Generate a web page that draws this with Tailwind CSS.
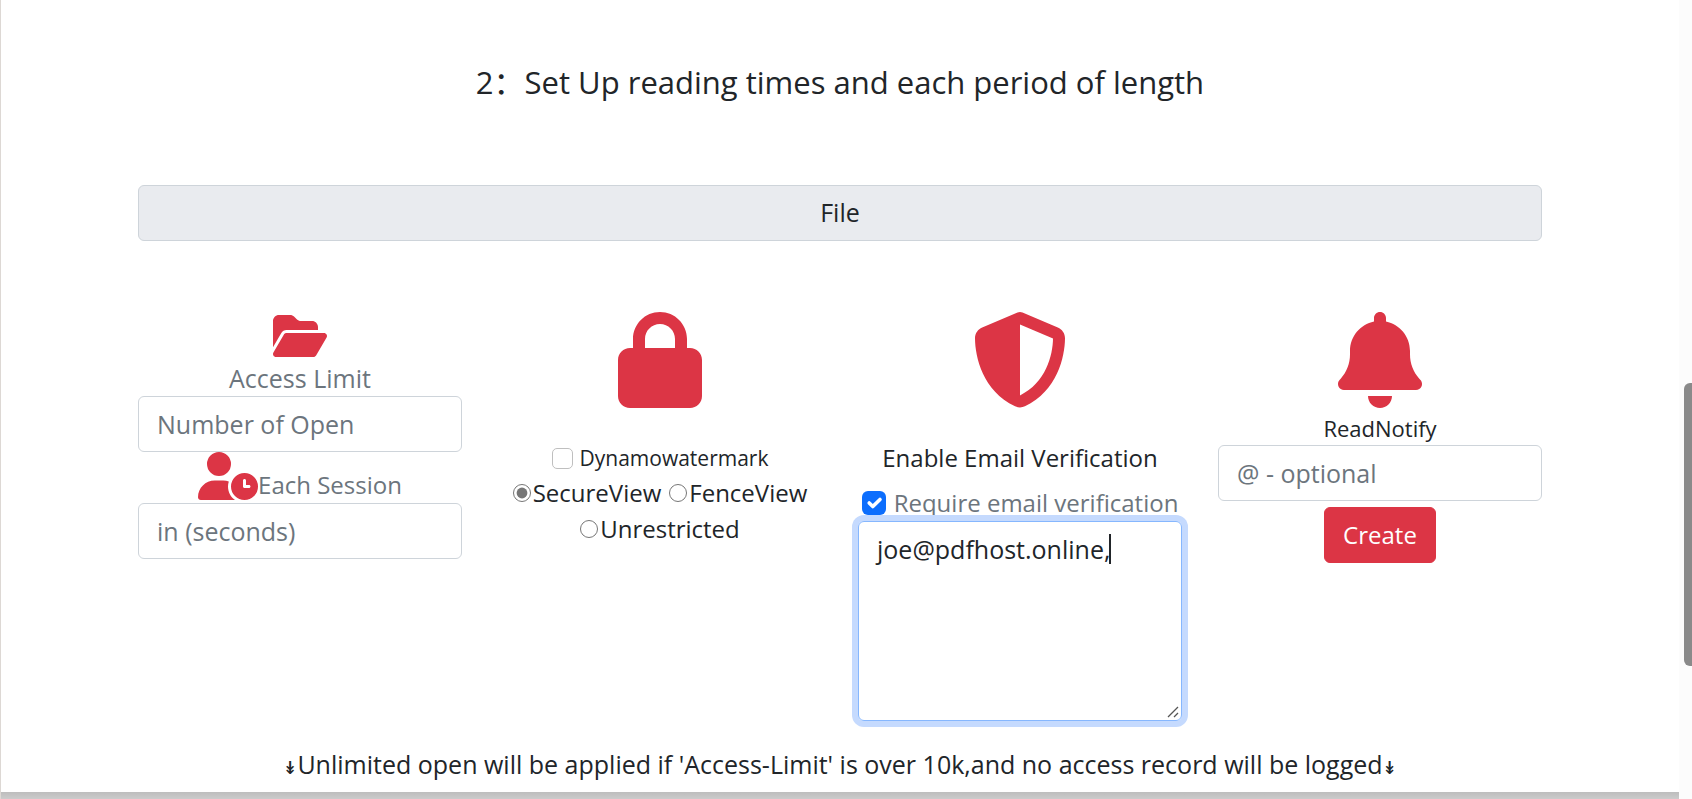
<!DOCTYPE html>
<html lang="en">
<head>
<meta charset="utf-8">
<meta name="viewport" content="width=device-width, initial-scale=1">
<title>Set Up reading times</title>
<script src="https://cdn.jsdelivr.net/npm/@tailwindcss/browser@4"></script>
</head>
<body class="flex min-h-screen bg-white text-[25px]/[36px] text-[#212529] font-['Open_Sans','Noto_Sans_CJK_SC',sans-serif]">
<main class="flex min-w-0 flex-1 flex-col border-l border-[#ddd8d4]">
  <div class="mx-auto flex w-full max-w-[1404px] flex-1 flex-col">
    <h1 class="pt-[59px] text-center text-[31px]/[46px]">2：Set Up reading times and each period of length</h1>
    <div class="mt-20 rounded-md border border-[#ced4da] bg-[#e9ebef] pt-2 pb-2.5 text-center">File</div>
    <form class="mt-[71px] grid grid-cols-4 gap-9 text-center">
      <section class="flex flex-col items-center">
        <svg class="h-12 fill-[#dc3545]" viewBox="0 0 576 512" aria-hidden="true"><path d="M88.700 223.800L0 375.800V96C0 60.700 28.700 32 64 32H181.500c17 0 33.300 6.700 45.300 18.700l26.500 26.500c12 12 28.300 18.700 45.300 18.700H416c35.300 0 64 28.700 64 64v32H144c-22.800 0-43.800 12.100-55.300 31.800zm27.600 16.100C122.100 230 132.600 224 144 224H544c11.500 0 22 6.100 27.700 16.100s5.700 22.200-.1 32.100l-112 192C453.900 474 443.400 480 432 480H32c-11.500 0-22-6.100-27.700-16.100s-5.700-22.200 .1-32.100l112-192z"/></svg>
        <label for="opens" class="text-[#6c757d]">Access Limit</label>
        <input id="opens" type="text" placeholder="Number of Open" class="w-full rounded-md border border-[#ced4da] px-[18px] py-[9px] placeholder:text-[#6c757d]">
        <div class="flex h-[51px] items-start">
          <svg class="h-12 fill-[#dc3545]" viewBox="0 0 640 512" aria-hidden="true"><path d="M224 0a128 128 0 1 1 0 256A128 128 0 1 1 224 0zM178.300 304h91.400c20.600 0 40.400 3.500 58.800 9.900C323 331 320 349.100 320 368c0 59.500 29.500 112.100 74.800 144H29.700C13.300 512 0 498.700 0 482.300C0 383.800 79.800 304 178.300 304zM352 368a144 144 0 1 1 288 0 144 144 0 1 1 -288 0zm144-80c-8.800 0-16 7.200-16 16v64c0 8.800 7.200 16 16 16h48c8.800 0 16-7.200 16-16s-7.200-16-16-16H512V304c0-8.800-7.200-16-16-16z"/></svg>
          <label for="secs" class="pt-[15px] text-2xl/[36px] text-[#6c757d]">Each Session</label>
        </div>
        <input id="secs" type="text" placeholder="in (seconds)" class="w-full rounded-md border border-[#ced4da] px-[18px] py-[9px] placeholder:text-[#6c757d]">
      </section>
      <section class="flex flex-col items-center">
        <svg class="h-24 fill-[#dc3545]" viewBox="0 0 448 512" aria-hidden="true"><path d="M144 144v48H304V144c0-44.200-35.800-80-80-80s-80 35.800-80 80zM80 192V144C80 64.500 144.500 0 224 0s144 64.500 144 144v48h16c35.300 0 64 28.700 64 64V448c0 35.300-28.700 64-64 64H64c-35.300 0-64-28.700-64-64V256c0-35.300 28.700-64 64-64H80z"/></svg>
        <label class="mt-[34px] flex items-center gap-[7px] text-[21px]/[33px]"><input type="checkbox" class="size-[21px] appearance-none rounded-[5px] border border-[#bfbfbf] bg-white">Dynamowatermark</label>
        <div class="flex flex-wrap justify-center gap-x-2 text-2xl/[36px]">
          <label class="flex items-center gap-0.5"><input type="radio" name="view" checked class="size-[18px] accent-[#767676]">SecureView</label>
          <label class="flex items-center gap-0.5"><input type="radio" name="view" class="size-[18px]">FenceView</label>
          <label class="flex items-center gap-0.5"><input type="radio" name="view" class="size-[18px]">Unrestricted</label>
        </div>
      </section>
      <section class="flex flex-col items-center">
        <svg class="h-24 fill-[#dc3545]" viewBox="0 0 512 512" aria-hidden="true"><path d="M256 0c4.600 0 9.200 1 13.400 2.900L457.700 82.800c22 9.300 38.400 31 38.300 57.200c-.5 99.200-41.300 280.700-213.600 363.200c-16.700 8-36.100 8-52.800 0C57.300 420.700 16.500 239.200 16 140c-.1-26.200 16.300-47.900 38.300-57.200L242.700 2.900C246.800 1 251.400 0 256 0zm0 66.800V444.800C394 378 431.100 230.100 432 141.400L256 66.800z"/></svg>
        <label for="emails" class="mt-8 text-2xl/[36px]">Enable Email Verification</label>
        <label class="mt-[9px] flex items-center gap-2 whitespace-nowrap text-2xl/[36px] text-[#6c757d]">
          <span class="relative flex">
            <input type="checkbox" checked class="size-6 appearance-none rounded-md bg-[#0d6efd]">
            <svg class="pointer-events-none absolute inset-0 size-6 fill-none stroke-white stroke-3" viewBox="0 0 20 20" aria-hidden="true"><path stroke-linecap="round" stroke-linejoin="round" d="m6 10 3 3 6-6"/></svg>
          </span>Require email verification</label>
        <div class="relative flex w-full">
          <textarea id="emails" class="h-[200px] w-full resize-none rounded-md border border-[#86b7fe] px-[18px] py-[9px] shadow-[0_0_0_6px_#c5dafe] outline-none">joe@pdfhost.online,</textarea>
          <span class="absolute left-[251px] top-[13px] h-[30px] w-0.5 bg-[#212529]"></span>
          <svg class="pointer-events-none absolute right-[3px] bottom-[3px] size-3 fill-none stroke-[#555]" viewBox="0 0 12 12" aria-hidden="true"><path stroke-width="1.300" d="M1 11 11 1M7 11l4-4"/></svg>
        </div>
      </section>
      <section class="flex flex-col items-center">
        <svg class="h-24 fill-[#dc3545]" viewBox="0 0 448 512" aria-hidden="true"><path d="M224 0c-17.700 0-32 14.300-32 32V51.200C119 66 64 130.600 64 208v18.800c0 47-17.300 92.400-48.500 127.600l-7.400 8.300c-8.400 9.400-10.400 22.900-5.300 34.400S19.400 416 32 416H416c12.600 0 24-7.400 29.200-18.900s3.100-25-5.300-34.400l-7.400-8.300C401.300 319.200 384 273.900 384 226.800V208c0-77.400-55-142-128-156.800V32c0-17.700-14.300-32-32-32zm45.300 493.300c12-12 18.700-28.300 18.700-45.300H160c0 17 6.700 33.300 18.700 45.300s28.300 18.700 45.300 18.700s33.300-6.700 45.300-18.700z"/></svg>
        <label for="notify" class="pt-1 text-[22px]/[33px]">ReadNotify</label>
        <input id="notify" type="text" placeholder="@ - optional" class="w-full rounded-md border border-[#ced4da] px-[18px] py-[9px] placeholder:text-[#6c757d]">
        <button type="button" class="mt-1.5 rounded-md border border-[#dc3545] bg-[#dc3545] px-[18px] py-[9px] text-2xl/[36px] text-white">Create</button>
      </section>
    </form>
    <p class="mt-[25px] pb-1 text-center"><span class="font-['DejaVu_Sans_Mono'] text-2xl/[20px]">↡</span>Unlimited open will be applied if 'Access-Limit' is over 10k,and no access record will be logged<span class="font-['DejaVu_Sans_Mono'] text-2xl/[20px]">↡</span></p>
  </div>
  <div class="h-[7px] bg-linear-to-b from-[#bdbdbd] to-[#cbcbcb]"></div>
</main>
<aside class="flex w-[13px] flex-col items-end bg-[#fcfcfc] pt-[383px]"><div class="h-[283px] w-2 rounded-l-md bg-[#8a8a8a]"></div></aside>
</body>
</html>
